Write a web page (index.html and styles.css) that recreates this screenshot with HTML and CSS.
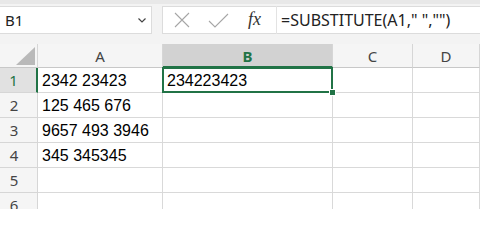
FILE: index.html
```html
<!DOCTYPE html>
<html>
<head>
<meta charset="utf-8">
<link rel="stylesheet" href="styles.css">
</head>
<body>
<div class="topstrip"></div>
<div class="toolbar">
  <div class="namebox">
    <span class="name">B1</span>
    <svg class="chev" width="8" height="5" viewBox="0 0 8 5"><path d="M0.5 0.5 L4 4 L7.5 0.5" fill="none" stroke="#444" stroke-width="1.2"/></svg>
  </div>
  <div class="formulabox">
    <svg class="ico-x" width="16" height="16" viewBox="0 0 16 16"><path d="M1 1 L15 15 M15 1 L1 15" stroke="#a6a6a6" stroke-width="1.1" fill="none"/></svg>
    <svg class="ico-check" width="21" height="15" viewBox="0 0 21 15"><path d="M1 8 L7 14 L20 1" stroke="#a6a6a6" stroke-width="1.1" fill="none"/></svg>
    <span class="fx">fx</span>
    <span class="divider"></span>
    <span class="formula">=SUBSTITUTE(A1," ","")</span>
  </div>
</div>
<div class="sheet">
  <div class="hd corner"><svg width="19" height="18" viewBox="0 0 19 18"><polygon points="0,18 19,0 19,18" fill="#b9b9b9"/></svg></div>
  <div class="hd col">A</div>
  <div class="hd col sel">B</div>
  <div class="hd col">C</div>
  <div class="hd col">D</div>

  <div class="hd row rsel">1</div>
  <div class="c">2342 23423</div>
  <div class="c active">234223423<span class="handle"></span></div>
  <div class="c"></div>
  <div class="c"></div>

  <div class="hd row">2</div>
  <div class="c">125 465 676</div>
  <div class="c"></div>
  <div class="c"></div>
  <div class="c"></div>

  <div class="hd row">3</div>
  <div class="c">9657 493 3946</div>
  <div class="c"></div>
  <div class="c"></div>
  <div class="c"></div>

  <div class="hd row">4</div>
  <div class="c">345 345345</div>
  <div class="c"></div>
  <div class="c"></div>
  <div class="c"></div>

  <div class="hd row">5</div>
  <div class="c"></div>
  <div class="c"></div>
  <div class="c"></div>
  <div class="c"></div>

  <div class="hd row">6</div>
  <div class="c"></div>
  <div class="c"></div>
  <div class="c"></div>
  <div class="c"></div>
</div>
</body>
</html>
```

FILE: styles.css
```css
* { box-sizing: border-box; }
html, body { margin: 0; padding: 0; }
body {
  width: 480px;
  height: 209px;
  overflow: hidden;
  background: #ffffff;
  font-family: "Noto Sans", "Open Sans", sans-serif;
}
.topstrip {
  height: 4px;
  background: #e8e8e8;
}
.toolbar {
  height: 40px;
  background: #f3f3f3;
  display: flex;
  align-items: flex-start;
  padding-top: 2px;
  gap: 10px;
}
.namebox {
  width: 152px;
  height: 28px;
  background: #ffffff;
  border: 1px solid #dcdcdc;
  border-left: none;
  display: flex;
  align-items: center;
  justify-content: space-between;
  padding: 0 5px 0 5px;
}
.name {
  font-size: 15px;
  color: #222;
  line-height: 1;
}
.chev { margin-top: 1px; }
.formulabox {
  flex: 1;
  height: 28px;
  background: #ffffff;
  border: 1px solid #dcdcdc;
  border-right: none;
  display: flex;
  align-items: center;
  padding-left: 11px;
}
.ico-x { margin-right: 18px; }
.ico-check { margin-right: 19px; }
.fx {
  font-family: "Liberation Serif", serif;
  font-style: italic;
  font-size: 18px;
  color: #333;
  width: 28px;
  line-height: 1;
  margin-top: -2px;
}
.divider {
  width: 1px;
  height: 28px;
  background: #e3e3e3;
  margin-right: 4px;
}
.formula {
  font-size: 16px;
  color: #222;
  white-space: pre;
  line-height: 1;
}
.sheet {
  display: grid;
  grid-template-columns: 38px 125px 170px 80px 1fr;
  grid-template-rows: 24px repeat(6, 25px);
}
.hd {
  background: #f5f5f5;
  color: #444;
  font-size: 15px;
  display: flex;
  align-items: center;
  justify-content: center;
  border-right: 1px solid #d6d6d6;
  border-bottom: 1px solid #d6d6d6;
}
.corner {
  justify-content: flex-end;
  align-items: flex-end;
  padding: 0 2px 2px 0;
  border-bottom: 1px solid #c8c8c8;
}
.col { padding-top: 1px; border-bottom: 1px solid #c8c8c8; }
.col.sel {
  background: #d2d2d2;
  color: #217346;
  font-weight: 700;
  border-bottom: 2px solid #217346;
}
.row { padding-right: 9px; }
.row.rsel {
  background: #e1e1e1;
  color: #217346;
  border-right: 2px solid #217346;
}
.c {
  font-family: "Liberation Sans", Arial, sans-serif;
  font-size: 16px;
  color: #000;
  border-right: 1px solid #d9d9d9;
  border-bottom: 1px solid #d9d9d9;
  display: flex;
  align-items: center;
  padding: 2px 0 0 4px;
  white-space: nowrap;
  position: relative;
}
.c.active::after {
  content: "";
  position: absolute;
  left: -1px;
  top: -1px;
  right: -1px;
  bottom: -1px;
  border: 2px solid #217346;
}
.handle {
  position: absolute;
  right: -4px;
  bottom: -4px;
  width: 7px;
  height: 7px;
  background: #217346;
  border: 1px solid #ffffff;
  z-index: 2;
}
```
